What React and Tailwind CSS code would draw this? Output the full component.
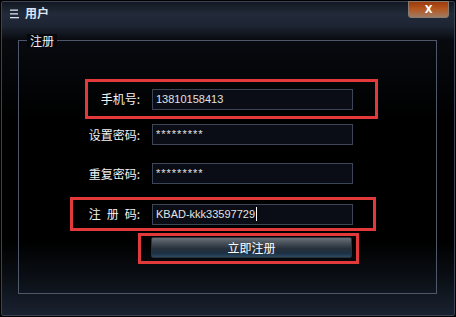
import React from 'react';

const labelCls = "flex justify-end text-[12px] leading-[14px] text-[#f2f2f2] whitespace-pre";
const inputCls = "h-[21px] w-[201px] border border-[#3d4658] bg-[#0a0d15] pl-[3px] text-[11px] leading-[19px] text-[#e2e2e2] [font-family:'Liberation_Sans',Arial,sans-serif]";

const Field = ({ label, value, labelWidth, cursor, stars }) => (
  <div className="flex items-center">
    <div className={labelCls} style={{ width: labelWidth }}>{label}</div>
    <div className={`ml-[12px] flex items-center ${inputCls}`}>
      <span className={stars ? 'tracking-[1px]' : ''}>{value}</span>
      {cursor && <span className="ml-[1px] h-[14px] w-[1px] bg-white" />}
    </div>
  </div>
);

export default function App() {
  return (
    <div className="h-[317px] w-[456px] bg-black p-[1px] [font-family:'Noto_Sans_CJK_SC','Noto_Sans',sans-serif]">
      <div className="flex h-[315px] w-[454px] flex-col rounded-[2px] border border-[#3a4354] bg-[linear-gradient(to_bottom,#121821_0px,#222b3a_12px,#1d2533_24px,#080a0f_38px,#000000_120px,#000000_240px,#0c1118_280px,#1a2230_313px)]">
        {/* title bar */}
        <div className="flex h-[28px] items-start justify-between">
          <div className="ml-[8px] mt-[4px] flex items-center">
            <svg width="9" height="10" viewBox="0 0 9 10" className="mt-[1px]">
              <rect x="0" y="0.5" width="8" height="1.3" fill="#d6dcea" />
              <rect x="0" y="4.2" width="8" height="1.3" fill="#d6dcea" />
              <rect x="0" y="8" width="9" height="1.3" fill="#d6dcea" />
            </svg>
            <span className="ml-[6px] text-[12px] font-bold leading-[14px] text-[#dde6f6]">用户</span>
          </div>
          <div className="mr-[5px] -mt-[1px] flex h-[17px] w-[41px] items-center justify-center rounded-b-[3px] border border-[#8a7a70] bg-[linear-gradient(to_bottom,#9c3a0c,#b4561e_45%,#a07a62_100%)] text-[10px] font-bold leading-none text-white [font-family:'DejaVu_Sans',sans-serif]">
            X
          </div>
        </div>

        {/* group box */}
        <div className="relative ml-[16px] mt-[10px] h-[254px] w-[419px] border border-[#4e586a]">
          <div className="absolute -top-[7px] left-[8px] bg-[#05070a] px-[3px] text-[12px] leading-[13px] text-[#eef0f4]">注册</div>

          <div className="flex flex-col">
            <div className="ml-[66px] mt-[38px] flex h-[40px] w-[293px] items-center border-[3px] border-[#e2393b]">
              <Field label="手机号:" value="13810158413" labelWidth={52} />
            </div>

            <div className="ml-[61px] mt-[5px]">
              <Field label="设置密码:" value="*********" labelWidth={60} stars />
            </div>

            <div className="ml-[61px] mt-[18px]">
              <Field label="重复密码:" value="*********" labelWidth={60} stars />
            </div>

            <div className="ml-[51px] mt-[13px] flex h-[34px] w-[306px] items-center border-[3px] border-[#e2393b]">
              <Field
                label={
                  <>
                    <span className="mr-[6px]">注</span>
                    <span className="mr-[6px]">册</span>
                    <span>码:</span>
                  </>
                }
                value="KBAD-kkk33597729"
                labelWidth={67}
                cursor
              />
            </div>

            <div className="ml-[119px] mt-[2px] h-[31px] w-[221px] border-[3px] border-[#e2393b] pl-[10px] pt-[1px]">
              <div className="flex h-[21px] w-[201px] items-center justify-center rounded-[2px] border border-[#2a313c] bg-[linear-gradient(to_bottom,#6a7079_0%,#4a525c_25%,#27313c_55%,#1c2f42_80%,#2c4a64_100%)] text-[12px] leading-none text-white">
                立即注册
              </div>
            </div>
          </div>
        </div>
      </div>
    </div>
  );
}
